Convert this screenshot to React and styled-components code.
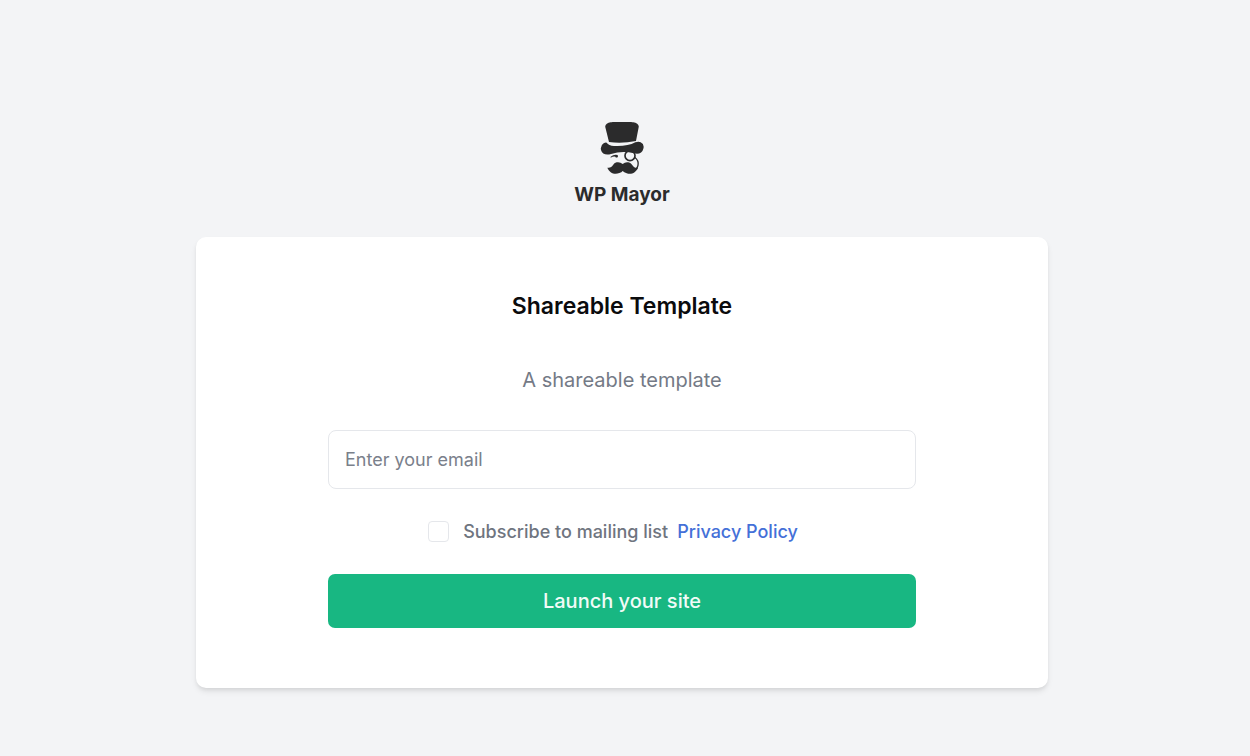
import React, { useState } from "react";
import styled, { createGlobalStyle } from "styled-components";

const GlobalStyle = createGlobalStyle`
  *, *::before, *::after { box-sizing: border-box; }
  body {
    margin: 0;
    background: #f3f4f6;
    font-family: Inter, "Liberation Sans", sans-serif;
  }
`;

const Page = styled.main`
  display: flex;
  flex-direction: column;
  align-items: center;
  min-height: 100vh;
  padding: 122px 22px 67px 16px;
`;

const Brand = styled.div`
  display: flex;
  flex-direction: column;
  align-items: center;
  gap: 7px;
  margin-bottom: 30px;
  color: #2b2b2c;
`;

const BrandName = styled.span`
  font-size: 19px;
  font-weight: 700;
  line-height: 24px;
`;

const Card = styled.section`
  display: flex;
  flex-direction: column;
  align-items: center;
  width: 100%;
  max-width: 852px;
  padding: 53px 24px 60px;
  border-radius: 10px;
  background: #fff;
  box-shadow: 0 4px 6px -1px rgba(0, 0, 0, 0.1), 0 2px 4px -1px rgba(0, 0, 0, 0.06);
`;

const Title = styled.h1`
  margin: 0;
  color: #0b0b0d;
  font-size: 23px;
  font-weight: 600;
  line-height: 32px;
`;

const Description = styled.p`
  margin: 44px 0 36px;
  color: #747a86;
  font-size: 20px;
  line-height: 28px;
`;

const Form = styled.form`
  display: flex;
  flex-direction: column;
  width: 100%;
  max-width: 588px;
`;

const EmailInput = styled.input`
  width: 100%;
  height: 59px;
  padding: 0 16px;
  border: 1px solid #e5e7eb;
  border-radius: 8px;
  background: #fff;
  color: #111827;
  font: 400 18px/28px Inter, "Liberation Sans", sans-serif;

  &::placeholder { color: #7a808b; opacity: 1; }
`;

const Consent = styled.div`
  display: flex;
  align-items: center;
  justify-content: center;
  margin: 28px 0;
  padding-right: 18px;
  font-size: 18px;
  font-weight: 500;
  line-height: 29px;
`;

const ConsentLabel = styled.label`
  display: flex;
  align-items: center;
  gap: 14px;
  color: #6f7580;
`;

const Checkbox = styled.input`
  appearance: none;
  width: 21px;
  height: 21px;
  margin: 0;
  border: 1px solid #e5e7eb;
  border-radius: 4px;
  background: #fff;

  &:checked { border-color: #18b782; background: #18b782; }
`;

const PolicyLink = styled.a`
  margin-left: 9px;
  color: #4470d8;
  text-decoration: none;
`;

const LaunchButton = styled.button`
  height: 54px;
  border: 0;
  border-radius: 7px;
  background: #18b782;
  color: #f1fbf7;
  font: 500 20px/28px Inter, "Liberation Sans", sans-serif;
  cursor: pointer;
`;

function MayorIcon() {
  return (
    <svg width="44" height="54" viewBox="30 21 132 162" fill="currentColor" aria-hidden="true">
      <path d="M46 37C44 29 52 24 62 22Q95 16 130 22C140 24 148 29 146 37L138 78Q97 86 57 81Z" />
      <path d="M50 83Q56 91 72 93Q112 95 136 82Q146 78 152 82Q164 88 160 101C157 114 146 119 132 115Q97 106 63 117C49 121 36 118 33 105Q30 92 41 85Q46 82 50 83Z" />
      <path d="M62 125Q72 117 83 120L84 127Q80 126 78 128L76 125Q69 124 62 128Z" />
      <circle cx="120" cy="122" r="15" fill="none" stroke="currentColor" strokeWidth="5" />
      <path d="M134 127Q147 137 144 151Q143 158 137 162" fill="none" stroke="currentColor" strokeWidth="4" />
      <path d="M98 147Q90 140 80 142C68 144 69 161 52 158C58 173 73 180 88 174Q95 172 98 168Q102 172 110 175C125 180 138 172 144 159C128 162 129 145 115 142Q106 140 98 147Z" />
    </svg>
  );
}

export default function App() {
  const [email, setEmail] = useState("");
  return (
    <>
      <GlobalStyle />
      <Page>
        <Brand>
          <MayorIcon />
          <BrandName>WP Mayor</BrandName>
        </Brand>
        <Card>
          <Title>Shareable Template</Title>
          <Description>A shareable template</Description>
          <Form onSubmit={(event) => event.preventDefault()}>
            <EmailInput
              type="email"
              aria-label="Email"
              placeholder="Enter your email"
              value={email}
              onChange={(event) => setEmail(event.target.value)}
            />
            <Consent>
              <ConsentLabel htmlFor="subscribe">
                <Checkbox id="subscribe" type="checkbox" />
                Subscribe to mailing list
              </ConsentLabel>
              <PolicyLink href="#privacy">Privacy Policy</PolicyLink>
            </Consent>
            <LaunchButton type="submit">Launch your site</LaunchButton>
          </Form>
        </Card>
      </Page>
    </>
  );
}
